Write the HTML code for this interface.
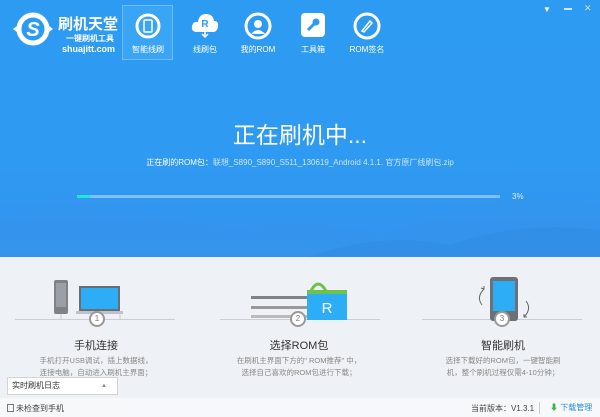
<!DOCTYPE html>
<html><head><meta charset="utf-8"><style>
*{margin:0;padding:0;box-sizing:border-box}
body{width:600px;height:417px;overflow:hidden;font-family:"Liberation Sans","Noto Sans CJK SC",sans-serif;position:relative;background:#eef1f5}
.blue{position:absolute;left:0;top:0;width:600px;height:257px;background:linear-gradient(180deg,#2e9bf3 0%,#2f9af2 60%,#3393ee 100%);overflow:hidden}
.abs{position:absolute}
.nav{position:absolute;top:0;width:52px;text-align:center;color:#fff;font-size:8px}
.nav .lbl{position:absolute;top:44px;left:0;width:52px}
.t{color:#fff;position:absolute}
.step{position:absolute;text-align:center;width:200px}
.step h3{font-size:11px;font-weight:normal;color:#333}
.step p{font-size:7.5px;color:#888;line-height:12px;margin-top:2px}
.circ{position:absolute;width:16px;height:16px;border-radius:50%;background:#fff;border:2px solid #999;font-size:8px;color:#777;text-align:center;line-height:12px}
</style></head><body>
<div class="blue">
<svg class="abs" style="left:0;top:150px" width="600" height="110"><path d="M0 70 Q60 40 130 60 T260 75 Q330 70 380 85 L460 60 Q520 40 600 55 L600 110 L0 110Z" fill="#3a93e8" opacity=".25"/><path d="M300 110 Q380 80 450 95 Q520 70 600 80 L600 110Z" fill="#2f86e0" opacity=".35"/></svg>
<svg class="abs" style="left:11px;top:11px" width="44" height="36" viewBox="0 0 44 36"><circle cx="22" cy="18" r="14" fill="none" stroke="#fff" stroke-width="5"/><path d="M2 18 L10 12 L10 24Z" fill="#fff"/><path d="M42 18 L34 12 L34 24Z" fill="#fff"/><text x="22" y="25" font-size="20" font-weight="bold" fill="#fff" text-anchor="middle" font-style="italic" font-family="Liberation Sans">S</text></svg>
<div class="t" style="left:58px;top:13px;font-size:15px;font-weight:bold">刷机天堂</div>
<div class="t" style="left:66px;top:33px;font-size:8px;font-weight:bold">一键刷机工具</div>
<div class="t" style="left:62px;top:44px;font-size:9px;font-weight:bold">shuajitt.com</div>
<div class="abs" style="left:122px;top:5px;width:51px;height:55px;background:#3aa5f5;border:1px solid #6fbcf6"></div>
<div class="nav" style="left:122px"><svg class="abs" style="left:12px;top:12px" width="28" height="28"><circle cx="14" cy="14" r="11" fill="none" stroke="#fff" stroke-width="3"/><rect x="10" y="8" width="8" height="12" rx="1" fill="none" stroke="#fff" stroke-width="1.5"/></svg><div class="lbl">智能线刷</div></div>
<div class="nav" style="left:179px"><svg class="abs" style="left:12px;top:10px" width="28" height="30"><path d="M6 22 Q0 22 1 16 Q2 11 7 12 Q8 4 15 4 Q22 4 23 11 Q28 11 27 17 Q26 22 22 22Z" fill="#fff"/><text x="14" y="17" font-size="10" font-weight="bold" fill="#2e9bf3" text-anchor="middle">R</text><path d="M14 19 V27 M11 24 L14 27 L17 24" stroke="#fff" stroke-width="1.5" fill="none"/></svg><div class="lbl">线刷包</div></div>
<div class="nav" style="left:232px"><svg class="abs" style="left:12px;top:12px" width="28" height="28"><circle cx="14" cy="14" r="12" fill="none" stroke="#fff" stroke-width="3"/><circle cx="14" cy="12" r="4" fill="#fff"/><path d="M7 22 Q14 14 21 22Z" fill="#fff"/></svg><div class="lbl">我的ROM</div></div>
<div class="nav" style="left:287px"><svg class="abs" style="left:13px;top:12px" width="26" height="26"><rect x="1" y="1" width="24" height="24" rx="4" fill="#fff"/><path d="M8 18 L15 11" stroke="#2e9bf3" stroke-width="3"/><circle cx="16" cy="10" r="3.5" fill="#2e9bf3"/></svg><div class="lbl">工具箱</div></div>
<div class="nav" style="left:341px"><svg class="abs" style="left:12px;top:12px" width="28" height="28"><circle cx="14" cy="14" r="12" fill="none" stroke="#fff" stroke-width="3"/><path d="M9 19 L17 9 L19 11 L11 20Z" fill="none" stroke="#fff" stroke-width="1.5"/></svg><div class="lbl">ROM签名</div></div>
<div class="t" style="left:543px;top:5px;font-size:8px">▼</div>
<div class="abs" style="left:564px;top:8px;width:8px;height:2px;background:#cfe6fb"></div>
<div class="t" style="left:584px;top:3px;font-size:9px;color:#cfe6fb">✕</div>
<div class="t" style="left:0;width:600px;text-align:center;top:116px;font-size:23px">正在刷机中...</div>
<div class="t" style="left:0;width:600px;text-align:center;top:157px;font-size:8px;color:#cde6fb"><span style="color:#fff">正在刷的ROM包：</span>联想_S890_S890_S511_130619_Android 4.1.1. 官方原厂线刷包.zip</div>
<div class="abs" style="left:77px;top:195px;width:423px;height:3px;background:#7fbff5"></div>
<div class="abs" style="left:77px;top:195px;width:13px;height:3px;background:#1ee7d8"></div>
<div class="t" style="left:512px;top:192px;font-size:8px;color:#d8ecfc">3%</div>
</div>
<div class="abs" style="left:15px;top:319px;width:160px;height:1px;background:#c9ced4"></div>
<div class="abs" style="left:220px;top:319px;width:160px;height:1px;background:#c9ced4"></div>
<div class="abs" style="left:422px;top:319px;width:160px;height:1px;background:#c9ced4"></div>
<svg class="abs" style="left:50px;top:280px" width="90" height="40"><rect x="4" y="0" width="14" height="34" rx="2" fill="#7f8388"/><rect x="6" y="3" width="10" height="24" fill="#9aa0a6"/><rect x="29" y="6" width="41" height="25" fill="#6a6e73"/><rect x="31" y="8" width="37" height="21" fill="#2cadf5"/><rect x="26" y="31" width="47" height="3" fill="#bfc3c7"/><path d="M11 34 V40 M70 34 V40" stroke="#ccc"/></svg>
<svg class="abs" style="left:248px;top:280px" width="100" height="40"><rect x="3" y="16" width="58" height="3" fill="#7f8388"/><rect x="3" y="26" width="58" height="3" fill="#999"/><rect x="3" y="35" width="58" height="3" fill="#bbb"/><path d="M63 11 Q70 -3 78 11" stroke="#6cc24a" stroke-width="3" fill="none"/><rect x="59" y="10" width="40" height="4" fill="#6cc24a"/><rect x="59" y="14" width="40" height="26" fill="#2cadf5"/><text x="79" y="33" font-size="15" fill="#fff" text-anchor="middle">R</text></svg>
<svg class="abs" style="left:470px;top:277px" width="70" height="44"><rect x="20" y="0" width="28" height="44" rx="3" fill="#6d7176"/><rect x="23" y="4" width="22" height="30" fill="#2cadf5"/><path d="M14 12 Q6 20 12 28 M11 11 L14 12 L14 9" stroke="#666" fill="none"/><path d="M56 24 Q62 32 54 40 M54 37 L54 40 L57 40" stroke="#666" fill="none"/></svg>
<div class="circ" style="left:89px;top:311px">1</div>
<div class="circ" style="left:290px;top:311px">2</div>
<div class="circ" style="left:494px;top:311px">3</div>
<div class="step" style="left:-4px;top:337px"><h3>手机连接</h3><p>手机打开USB调试，插上数据线，<br>连接电脑，自动进入刷机主界面；</p></div>
<div class="step" style="left:199px;top:337px"><h3>选择ROM包</h3><p>在刷机主界面下方的" ROM推荐" 中，<br>选择自己喜欢的ROM包进行下载；</p></div>
<div class="step" style="left:403px;top:337px"><h3>智能刷机</h3><p>选择下载好的ROM包，一键智能刷<br>机，整个刷机过程仅需4-10分钟；</p></div>
<div class="abs" style="left:7px;top:377px;width:111px;height:18px;background:#fff;border:1px solid #d0d4d8;font-size:8px;line-height:16px;padding-left:4px;color:#333">实时刷机日志<span style="position:absolute;right:10px;font-size:6px;color:#888">▲</span></div>
<div class="abs" style="left:0;top:398px;width:600px;height:19px;background:#f7f8fa"></div>
<div class="abs" style="left:7px;top:404px;width:7px;height:8px;border:1px solid #777"></div>
<div class="abs" style="left:16px;top:403px;font-size:8px;color:#444">未检查到手机</div>
<div class="abs" style="left:471px;top:403px;font-size:8px;color:#444">当前版本：V1.3.1</div>
<div class="abs" style="left:539px;top:402px;width:1px;height:12px;background:#ccc"></div>
<div class="abs" style="left:550px;top:402px;font-size:8px;color:#2a8de0"><span style="color:#3bb34a">⬇</span> 下载管理</div>
</body></html>
